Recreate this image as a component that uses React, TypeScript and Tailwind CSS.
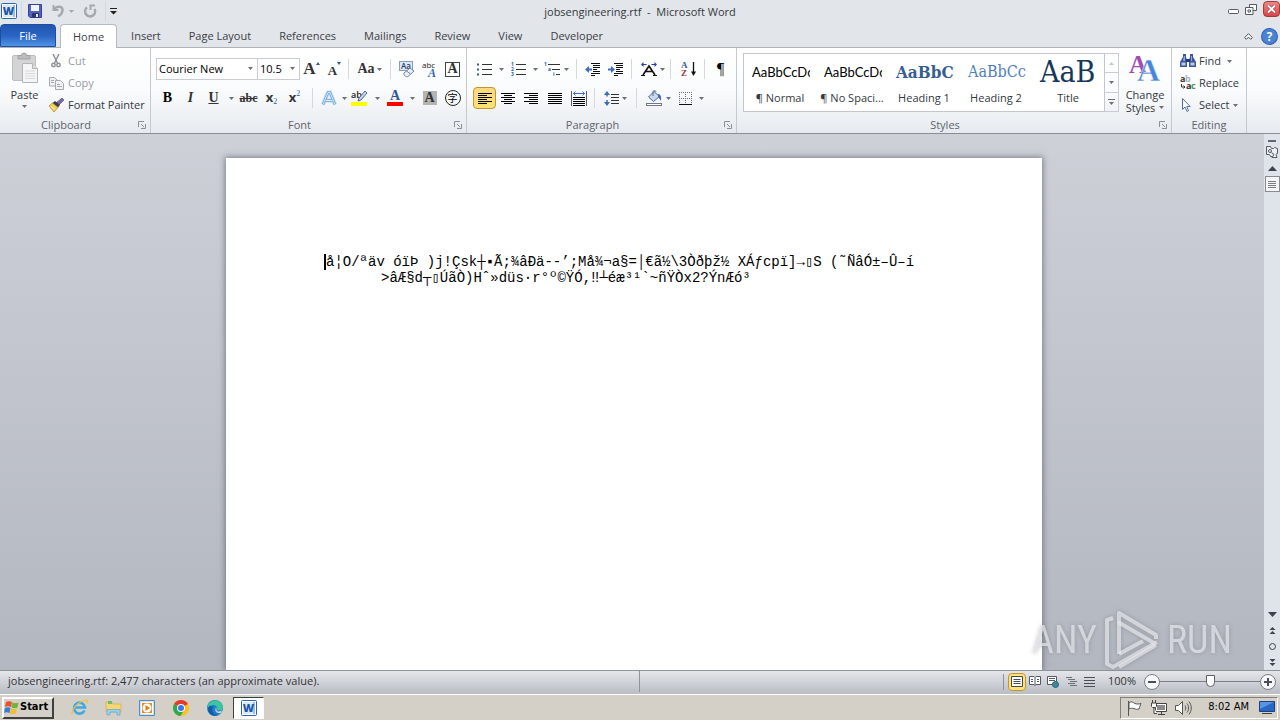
import type { ReactNode } from "react";
import clsx from "clsx";

const tabs = [
  "Insert",
  "Page Layout",
  "References",
  "Mailings",
  "Review",
  "View",
  "Developer",
];

const styleItems = [
  { name: "¶ Normal", sample: "AaBbCcDc", look: "font-['Lato',sans-serif] text-[13px] text-black" },
  { name: "¶ No Spaci...", sample: "AaBbCcDc", look: "font-['Lato',sans-serif] text-[13px] text-black" },
  { name: "Heading 1", sample: "AaBbCc", look: "font-['DejaVu_Serif_Condensed','DejaVu_Serif'] font-bold text-[17px] text-[#365f91]" },
  { name: "Heading 2", sample: "AaBbCc", look: "font-['DejaVu_Serif_Condensed','DejaVu_Serif'] text-base text-[#4f81bd]" },
  { name: "Title", sample: "AaB", look: "font-['DejaVu_Serif_Condensed','DejaVu_Serif'] text-[30px] text-[#17365d]" },
];

const Caret = ({ className = "text-[#6b7078]" }: { className?: string }) => (
  <svg width="5" height="3" viewBox="0 0 5 3" className={clsx("shrink-0", className)}>
    <path d="M0 0h5L2.5 3z" fill="currentColor" />
  </svg>
);

type ToolProps = {
  label: string;
  width?: string;
  active?: boolean;
  children: ReactNode;
};

const Tool = ({ label, width = "w-[23px]", active, children }: ToolProps) => (
  <button
    type="button"
    aria-label={label}
    className={clsx(
      "flex h-[22px] shrink-0 items-center justify-center rounded-sm",
      width,
      active && "border border-[#c2962f] bg-linear-to-b from-[#fbd980] to-[#ffe26f]"
    )}
  >
    {children}
  </button>
);

const Drop = ({ label, width = "w-3" }: { label: string; width?: string }) => (
  <Tool label={label} width={width}>
    <Caret />
  </Tool>
);

const Sep = ({ className = "mx-1" }: { className?: string }) => (
  <span className={clsx("h-5 w-px shrink-0 bg-[#d5d9de]", className)} />
);

const Launcher = ({ label }: { label: string }) => (
  <button type="button" aria-label={label} className="absolute right-1 top-1">
    <svg width="8" height="8" viewBox="0 0 8 8" fill="none" stroke="#8b9097">
      <path d="M.5 6V.5H6M3 3l3 3" />
      <path d="M7.5 3v4.500H3" />
    </svg>
  </button>
);

type GroupProps = {
  title: string;
  width: string;
  launcher?: boolean;
  children: ReactNode;
};

const Group = ({ title, width, launcher, children }: GroupProps) => (
  <section className={clsx("flex shrink-0 flex-col border-r border-[#c6cad0]", width)}>
    <div className="h-[69px]">{children}</div>
    <div className={clsx("relative h-4 text-center leading-4 text-[#5f646b]", launcher && "pr-[18px]")}>
      {title}
      {launcher && <Launcher label={title + " options"} />}
    </div>
  </section>
);

/* ---------- icons ---------- */

const WordIcon = () => (
  <svg width="16" height="16" viewBox="0 0 16 16">
    <rect x=".5" y=".5" width="15" height="15" rx="1" fill="#fff" stroke="#2b63b0" />
    <rect x="2" y="2" width="12" height="12" fill="#dbe8f7" />
    <path d="M12 2h2v12h-2z" fill="#9fbfe6" />
    <text x="7.500" y="12" textAnchor="middle" fontFamily="Open Sans" fontWeight="800" fontSize="11" fill="#1d57a8">
      W
    </text>
  </svg>
);

const SaveIcon = () => (
  <svg width="14" height="14" viewBox="0 0 14 14">
    <path d="M.5.500h13v13H2L.5 12z" fill="#5363bd" stroke="#37429a" />
    <path d="M3 1h8v6H3z" fill="#f3f5fb" />
    <path d="M4 9h7v4.500H4z" fill="#2c3377" />
    <path d="M8 10h2v3H8z" fill="#e8ebf7" />
  </svg>
);

const UndoIcon = () => (
  <svg width="14" height="14" viewBox="0 0 14 14" fill="none" stroke="#a5a9af" strokeWidth="2">
    <path d="M3.500 1v5h5" />
    <path d="M4 5.500C7 1.500 12.500 2 12.500 6c0 3-2 5-4.500 6.500" strokeWidth="2.500" />
  </svg>
);

const RedoIcon = () => (
  <svg width="14" height="14" viewBox="0 0 14 14" fill="none" stroke="#a5a9af" strokeWidth="2.500">
    <path d="M11.500 5A5 5 0 1 1 4 3.500" />
    <path d="M12 1.500H7.500V6" strokeWidth="2" />
  </svg>
);

const PasteIcon = () => (
  <svg width="28" height="32" viewBox="0 0 28 32">
    <rect x="1.500" y="3.500" width="23" height="25" rx="1.500" fill="#d4d4d6" stroke="#bdbdc0" />
    <path d="M7 7V3.500h3.500a2.500 2.500 0 0 1 5 0H19V7z" fill="#bcbcbf" stroke="#a2a2a5" />
    <path d="M11.500 11.500h10l5 5v14h-15z" fill="#f5f5f6" stroke="#b4b4b8" />
    <path d="M21.500 11.500v5h5" fill="#dedee0" stroke="#b4b4b8" />
    <path d="M14 19h10M14 21.500h10M14 24h10M14 26.500h10" stroke="#d9d9dc" />
  </svg>
);

const CutIcon = () => (
  <svg width="10" height="14" viewBox="0 0 10 14" fill="none" stroke="#8f9298" strokeWidth="1.500">
    <path d="M2 0 6.500 9M8 0 3.500 9" />
    <circle cx="2.500" cy="11" r="1.700" />
    <circle cx="7.500" cy="11" r="1.700" />
  </svg>
);

const CopyIcon = () => (
  <svg width="15" height="13" viewBox="0 0 15 13" fill="#f1f1f2" stroke="#a6a9ae">
    <path d="M.5.500h5l2.500 2.500v6H.5z" />
    <path d="M6.500 3.500h5l3 3v6h-8z" />
    <path d="M2 3.500h3M2 5.500h3M8 7.500h3M8 9.500h5" />
  </svg>
);

const BrushIcon = () => (
  <svg width="15" height="14" viewBox="0 0 15 14">
    <path d="M13 0l2 2-5 5-3-2z" fill="#7d6bb0" stroke="#4e4376" strokeWidth=".6" />
    <path d="M6 3l5 4-2 2.500-6-4z" fill="#3b414c" />
    <path d="M3.500 5l5.500 4.500-4 4.500L0 8z" fill="#f3cf58" stroke="#a98522" strokeWidth=".7" />
    <path d="M2 8.500l4 3" stroke="#fff3b8" />
  </svg>
);

const ClearFormatIcon = () => (
  <svg width="17" height="17" viewBox="0 0 17 17">
    <rect x="1.500" y=".5" width="13" height="9" fill="#dbe7f7" stroke="#8a9cba" />
    <text x="3" y="8" fontFamily="Open Sans" fontWeight="600" fontSize="8" fill="#223a66">Aa</text>
    <path d="M6 12l6-5 4 3-6 5.500c-2 1-5-1.500-4-3.500z" fill="#eceff7" stroke="#7280a8" />
    <path d="M8.500 10l4 3" stroke="#7280a8" />
  </svg>
);

const ListIcon = ({ numbered }: { numbered?: boolean }) => (
  <svg width="15" height="15" viewBox="0 0 15 15">
    <path d="M5 2.500h10M5 7.500h10M5 12.500h10" stroke="#333" />
    {numbered ? (
      <g fontFamily="Open Sans" fontWeight="700" fontSize="5" fill="#3059a8">
        <text x="0" y="4">1</text>
        <text x="0" y="9">2</text>
        <text x="0" y="14">3</text>
      </g>
    ) : (
      <path d="M0 1.500h2v2H0zM0 6.500h2v2H0zM0 11.500h2v2H0z" fill="#3b5b93" />
    )}
  </svg>
);

const MultiLevelIcon = () => (
  <svg width="17" height="15" viewBox="0 0 17 15">
    <path d="M4 2.500h12M8 7.500h8M12 12.500h4" stroke="#333" />
    <g fontFamily="Open Sans" fontWeight="700" fontSize="5" fill="#3059a8">
      <text x="0" y="4">1</text>
      <text x="4" y="9">a</text>
      <text x="9" y="14">i</text>
    </g>
  </svg>
);

const IndentIcon = ({ more }: { more?: boolean }) => (
  <svg width="16" height="13" viewBox="0 0 16 13">
    <path d="M6 .5h9M8 2.500h7M8 4.500h7M8 6.500h4M8 8.500h7M6 10.500h9M6 12.500h4" stroke="#111" />
    <path d={more ? "M0 5.500h3V3l4 3.500-4 3.500V7.500H0z" : "M7 5.500H4V3L0 6.500 4 10V7.500h3z"} fill="#3d6cc0" />
  </svg>
);

const lines = {
  left: "M0 .5h14M0 2.500h9M0 4.500h14M0 6.500h9M0 8.500h14M0 10.500h9",
  center: "M0 .5h14M3 2.500h8M0 4.500h14M3 6.500h8M0 8.500h14M3 10.500h8",
  right: "M0 .5h14M5 2.500h9M0 4.500h14M5 6.500h9M0 8.500h14M5 10.500h9",
  justify: "M0 .5h14M0 2.500h14M0 4.500h14M0 6.500h14M0 8.500h14M0 10.500h14",
};

const AlignIcon = ({ kind }: { kind: keyof typeof lines }) => (
  <svg width="14" height="11" viewBox="0 0 14 11">
    <path d={lines[kind]} stroke="#000" />
  </svg>
);

const DistributeIcon = () => (
  <svg width="16" height="15" viewBox="0 0 16 15">
    <path d="M.5 0v15M15.500 0v15" stroke="#555c68" />
    <path d="M2 2.500h12M4.500.500l-2 2 2 2M11.500.500l2 2-2 2" stroke="#3d6cc0" fill="none" />
    <path d="M2 6.500h12M2 8.500h12M2 10.500h12M2 12.500h12M2 14.500h12" stroke="#000" />
  </svg>
);

const SpacingIcon = () => (
  <svg width="15" height="15" viewBox="0 0 15 15">
    <path d="M3 1v4.500M3 9v5" stroke="#3d6cc0" strokeWidth="1.500" />
    <path d="M0 4l3-4 3 4zM0 11l3 4 3-4z" fill="#3d6cc0" />
    <path d="M7 3.500h8M7 6.500h8M7 9.500h8M7 12.500h8" stroke="#333" />
  </svg>
);

const StretchIcon = () => (
  <svg width="16" height="14" viewBox="0 0 16 14">
    <path d="M0 2.500 2.500 0v2h3v1h-3v2zM16 2.500 13.500 0v2h-3v1h3v2z" fill="#2b3fa8" />
    <path d="M0 13.500h4M12 13.500h4" stroke="#111" />
    <path d="M2 13 8 4l6 9M4.500 9.500h7" fill="none" stroke="#111" strokeWidth="1.600" />
  </svg>
);

const SortIcon = () => (
  <svg width="16" height="16" viewBox="0 0 16 16">
    <g fontFamily="Liberation Serif" fontWeight="700" fontSize="9">
      <text x="0" y="7" fill="#3059a8">A</text>
      <text x="0" y="15" fill="#a5353a">Z</text>
    </g>
    <path d="M12.500 1v12" stroke="#111" strokeWidth="1.300" />
    <path d="M10 10.500h5L12.500 15z" fill="#111" />
  </svg>
);

const BucketIcon = () => (
  <svg width="16" height="16" viewBox="0 0 16 16">
    <path d="M8 1.500l5.500 5-6 5-5-4.500z" fill="#c9d9f0" stroke="#54698f" />
    <path d="M7 6V2c0-2 3-2 3 0" fill="none" stroke="#54698f" />
    <path d="M12 4c3 0 3.500 3 3 7-1-2-2-3-3-4z" fill="#3d6cc0" />
    <rect x=".5" y="13.500" width="15" height="2" fill="#fff" stroke="#6b7890" />
  </svg>
);

const BorderIcon = () => (
  <svg width="13" height="13" viewBox="0 0 13 13" stroke="#6d7177">
    <path d="M.5 0v12M6.500 0v12M12.500 0v12M0 .5h13M0 6.500h13" strokeDasharray="1 1" />
    <path d="M0 12.500h13" stroke="#111" />
  </svg>
);

const HighlightIcon = () => (
  <svg width="17" height="17" viewBox="0 0 17 17">
    <text x="0" y="8" fontFamily="Open Sans" fontWeight="600" fontSize="9" fill="#222">ab</text>
    <path d="M14 1l2 2-6 7-3 1 1-3z" fill="#c9d3e8" stroke="#556a96" />
    <path d="M0 12h16v4H0z" fill="#ff0" />
  </svg>
);

const FontColorIcon = () => (
  <svg width="16" height="17" viewBox="0 0 16 17">
    <text x="8" y="10" textAnchor="middle" fontFamily="Liberation Serif" fontWeight="700" fontSize="14" fill="#36549a">A</text>
    <path d="M0 12h16v4H0z" fill="#f00" />
  </svg>
);

const PhoneticIcon = () => (
  <svg width="17" height="17" viewBox="0 0 17 17" className="overflow-visible">
    <text x="1" y="7" fontFamily="Open Sans" fontSize="8" fill="#222">abc</text>
    <text x="7" y="16" fontFamily="Liberation Serif" fontStyle="italic" fontWeight="700" fontSize="12" fill="#2f66b8">A</text>
  </svg>
);

const ChangeStylesIcon = () => (
  <svg width="30" height="29" viewBox="0 0 30 29" className="overflow-visible" fontFamily="Liberation Serif" fontWeight="700">
    <text x="-1" y="20" fontSize="25" fill="#a04fb0">A</text>
    <text x="7" y="28" fontSize="32" fill="#4a86d8" stroke="#fff" strokeWidth=".4">A</text>
  </svg>
);

const FindIcon = () => (
  <svg width="16" height="14" viewBox="0 0 16 14">
    <path d="M3 0h3v3l1 3v7H0V8l3-5zM10 0h3v3l3 5v5H9V6l1-3z" fill="#3c549c" />
    <path d="M1.500 8.500h4v3h-4zM10.500 8.500h4v3h-4z" fill="#b9c9ee" />
    <path d="M4 2h1v5H3zM11 2h1v5h-1z" fill="#93a8de" />
    <path d="M6 5h4v3H6z" fill="#28396f" />
  </svg>
);

const ReplaceIcon = () => (
  <svg width="17" height="16" viewBox="0 0 17 16" fontFamily="Open Sans" fontWeight="700" fontSize="9">
    <text x="0" y="7" fill="#333">a</text>
    <text x="5" y="7" fill="#aeb2b8">b</text>
    <text x="6" y="14" fill="#333">a</text>
    <text x="11" y="14" fill="#3c9a45">c</text>
    <path d="M1.500 9v3H5M3.500 10.500 5 12l-1.500 1.500" fill="none" stroke="#333" />
  </svg>
);

const PointerIcon = () => (
  <svg width="9" height="14" viewBox="0 0 9 14">
    <path d="M.5.500v11L3 9l2 4.500 1.500-.8L4.700 8.500h3.500z" fill="#fff" stroke="#57719f" />
  </svg>
);

const ArrowUpDown = ({ kind }: { kind: "up" | "down" | "prev" | "next" | "ball" }) => (
  <svg width="9" height="9" viewBox="0 0 9 9" fill="#3e434b">
    {kind === "up" && <path d="M0 7h9L4.500 2z" />}
    {kind === "down" && <path d="M0 2h9L4.500 7z" />}
    {kind === "prev" && <path d="M1.500 4h6l-3-3zM1.500 8h6l-3-3z" />}
    {kind === "next" && <path d="M1.500 1h6l-3 3zM1.500 5h6l-3 3z" />}
    {kind === "ball" && <circle cx="4.500" cy="4.500" r="3" fill="none" stroke="#3e434b" />}
  </svg>
);

/* ---------- window parts ---------- */

const TitleBar = () => (
  <header className="relative flex h-6 shrink-0 items-center justify-between pb-0.5 pl-px">
    <div className="flex items-center">
      <WordIcon />
      <Sep className="ml-1 h-4" />
      <div className="ml-1.5 flex items-center">
        <button type="button" aria-label="Save"><SaveIcon /></button>
        <button type="button" aria-label="Undo" className="ml-2"><UndoIcon /></button>
        <button type="button" aria-label="Undo history" className="ml-1 mr-2 px-px">
          <Caret className="text-[#a5a9af]" />
        </button>
        <button type="button" aria-label="Redo"><RedoIcon /></button>
      </div>
      <Sep className="ml-2 mr-1 h-4" />
      <button type="button" aria-label="Customize Quick Access Toolbar">
        <svg width="7" height="7" viewBox="0 0 7 7">
          <path d="M0 0h7v1H0zM0 3h7L3.500 6.500z" fill="#222" />
        </svg>
      </button>
    </div>
    <h1 className="pointer-events-none absolute inset-x-0 top-1 text-center leading-4 whitespace-pre">
      jobsengineering.rtf  -  Microsoft Word
    </h1>
    <div className="flex items-center gap-1.5">
      <button type="button" aria-label="Minimize">
        <svg width="11" height="5" viewBox="0 0 11 5">
          <rect x=".5" y=".5" width="10" height="4" rx="1" fill="#fff" stroke="#555a62" />
        </svg>
      </button>
      <button type="button" aria-label="Restore">
        <svg width="12" height="11" viewBox="0 0 12 11" className="mb-1" fill="#fff" stroke="#555a62">
          <path d="M4.500.500h7v6h-7z" />
          <path d="M.5 3.500h7.500v7H.5z" />
          <path d="M3 6h2.500v2H3z" />
        </svg>
      </button>
      <button
        type="button"
        aria-label="Close"
        className="mb-1 flex h-4 w-[17px] items-center justify-center rounded-sm border border-[#a33a3a] bg-linear-to-b from-[#ee8585] to-[#d8444a]"
      >
        <svg width="9" height="8" viewBox="0 0 9 8">
          <path d="M1 .5l7 7M8 .5l-7 7" stroke="#7b2226" strokeWidth="3" />
          <path d="M1 .5l7 7M8 .5l-7 7" stroke="#fff" strokeWidth="2" />
        </svg>
      </button>
    </div>
  </header>
);

const TabBar = () => (
  <nav className="flex h-6 shrink-0 items-stretch border-b border-[#aeb3ba] text-[#3b4047] *:pt-px">
    <button
      type="button"
      className="w-14 shrink-0 rounded-t border border-[#1c4f9f] bg-linear-to-b from-[#2257b0] via-[#2a63c2] to-[#4f93e6] text-white"
    >
      File
    </button>
    <button
      type="button"
      className="-mb-px ml-1 rounded-t border border-b-0 border-[#b6bac1] bg-white px-3"
    >
      Home
    </button>
    {tabs.map((tab) => (
      <button type="button" key={tab} className="px-3.5">
        {tab}
      </button>
    ))}
    <div className="ml-auto flex items-center gap-2 pr-0.5">
      <button type="button" aria-label="Minimize the Ribbon">
        <svg width="9" height="7" viewBox="0 0 9 7">
          <path d="M.7 4.500 4.500.700l3.800 3.800-1.600 1.800-2.200-2.200-2.200 2.200z" fill="#fff" stroke="#444a52" />
        </svg>
      </button>
      <button type="button" aria-label="Help">
        <svg width="17" height="17" viewBox="0 0 16 16">
          <circle cx="8" cy="8" r="7.500" fill="#4a82d4" stroke="#2f62b4" />
          <text x="8" y="12" textAnchor="middle" fontFamily="Open Sans" fontWeight="700" fontSize="11" fill="#fff">?</text>
        </svg>
      </button>
    </div>
  </nav>
);

const ClipboardGroup = () => (
  <Group title="Clipboard" width="w-[151px]" launcher>
    <div className="flex">
      <button type="button" className="flex w-[49px] flex-col items-center pt-1 leading-4">
        <PasteIcon />
        <span className="mt-[3px]">Paste</span>
        <span className="pt-0.5"><Caret /></span>
      </button>
      <div className="flex flex-col items-start pt-0.5 leading-[22px]">
        <button type="button" disabled className="flex items-center text-[#9a9da3]">
          <span className="flex w-[19px] justify-start pl-0.5"><CutIcon /></span>Cut
        </button>
        <button type="button" disabled className="flex items-center text-[#9a9da3]">
          <span className="flex w-[19px] justify-start"><CopyIcon /></span>Copy
        </button>
        <button type="button" className="flex items-center whitespace-nowrap">
          <span className="flex w-[19px] justify-start"><BrushIcon /></span>Format Painter
        </button>
      </div>
    </div>
  </Group>
);

type ComboProps = { label: string; value: string; width: string };

const Combo = ({ label, value, width }: ComboProps) => (
  <label className={clsx("relative flex h-[22px] items-center border border-[#c9cdd3] bg-white", width)}>
    <select
      aria-label={label}
      defaultValue={value}
      className="h-full w-full appearance-none bg-transparent pl-0.5 text-black outline-none"
    >
      <option>{value}</option>
    </select>
    <span className="pointer-events-none absolute right-1 top-2"><Caret /></span>
  </label>
);

const FontGroup = () => (
  <Group title="Font" width="w-[316px]" launcher>
    <div className="flex h-full flex-col gap-[7px] pl-[5px] pt-2.5 font-['Liberation_Serif',serif] text-[#333]">
      <div className="flex items-center">
        <div className="flex font-['Open_Sans',sans-serif]">
          <Combo label="Font" value="Courier New" width="w-[102px]" />
          <Combo label="Font Size" value="10.5" width="w-[43px] -ml-px" />
        </div>
        <Tool label="Grow Font">
          <b className="text-[17px]">A</b>
          <svg width="4" height="3" viewBox="0 0 4 3" className="mb-3"><path d="M0 3h4L2 0z" fill="#36549a" /></svg>
        </Tool>
        <Tool label="Shrink Font">
          <b className="pt-1 text-[13px]">A</b>
          <svg width="4" height="3" viewBox="0 0 4 3" className="mb-3"><path d="M0 0h4L2 3z" fill="#36549a" /></svg>
        </Tool>
        <Sep className="ml-0.5 mr-1.5" />
        <Tool label="Change Case" width="w-[29px]">
          <b className="pr-0.5 text-sm">Aa</b>
          <Caret />
        </Tool>
        <Sep className="ml-1.5 mr-1" />
        <Tool label="Clear Formatting"><ClearFormatIcon /></Tool>
        <Tool label="Phonetic Guide"><PhoneticIcon /></Tool>
        <Tool label="Character Border">
          <b className="flex size-[15px] items-center justify-center border border-[#444] text-sm leading-none">A</b>
        </Tool>
      </div>
      <div className="flex items-center">
        <Tool label="Bold"><b className="text-sm text-black">B</b></Tool>
        <Tool label="Italic"><i className="text-sm font-bold">I</i></Tool>
        <Tool label="Underline"><b className="text-sm underline">U</b></Tool>
        <Drop label="Underline style" />
        <Tool label="Strikethrough">
          <b className="text-xs line-through">abc</b>
        </Tool>
        <Tool label="Subscript">
          <b className="font-['Open_Sans',sans-serif] text-[13px]">x</b>
          <span className="mt-2 text-[8px] text-[#3059a8]">2</span>
        </Tool>
        <Tool label="Superscript">
          <b className="font-['Open_Sans',sans-serif] text-[13px]">x</b>
          <span className="mb-2 text-[8px] text-[#3059a8]">2</span>
        </Tool>
        <Sep className="ml-1.5 mr-1" />
        <Tool label="Text Effects">
          <svg width="16" height="17" viewBox="0 0 16 17">
            <path d="M2 14.500 7 2.500h2l5 12M4.500 10.500h7" fill="none" stroke="#b5d6f3" strokeWidth="4" strokeLinejoin="round" />
            <path d="M2 14.500 7 2.500h2l5 12M4.500 10.500h7" fill="none" stroke="#5e9bd3" strokeWidth="2" />
            <path d="M2 14.500 7 2.500h2l5 12M4.500 10.500h7" fill="none" stroke="#fff" strokeWidth=".8" />
          </svg>
        </Tool>
        <Drop label="Text Effects options" width="w-2" />
        <Tool label="Highlight"><HighlightIcon /></Tool>
        <Drop label="Highlight color" />
        <Tool label="Font Color"><FontColorIcon /></Tool>
        <Drop label="Font Color options" />
        <Tool label="Character Shading">
          <b className="flex size-3.5 items-center justify-center bg-[#b4b4b4] text-sm leading-none">A</b>
        </Tool>
        <Tool label="Enclose Characters">
          <span className="flex size-4 items-center justify-center rounded-full border border-[#222] font-['Noto_Sans_CJK_SC',sans-serif] text-[10px] leading-none text-black">
            字
          </span>
        </Tool>
      </div>
    </div>
  </Group>
);

const ParagraphGroup = () => (
  <Group title="Paragraph" width="w-[270px]" launcher>
    <div className="flex h-full flex-col gap-[7px] pl-1.5 pt-2.5">
      <div className="flex items-center">
        <Tool label="Bullets"><ListIcon /></Tool>
        <Drop label="Bullet library" width="w-[11px]" />
        <Tool label="Numbering"><ListIcon numbered /></Tool>
        <Drop label="Numbering library" width="w-[11px]" />
        <Tool label="Multilevel List"><MultiLevelIcon /></Tool>
        <Drop label="List library" width="w-1" />
        <Sep className="ml-2 mr-1" />
        <Tool label="Decrease Indent"><IndentIcon /></Tool>
        <Tool label="Increase Indent"><IndentIcon more /></Tool>
        <Sep className="ml-1 mr-1.5" />
        <Tool label="Asian Layout" width="w-[22px]"><StretchIcon /></Tool>
        <Drop label="Asian Layout options" width="w-1" />
        <Sep className="mx-1.5" />
        <Tool label="Sort"><SortIcon /></Tool>
        <Sep className="mx-1" />
        <Tool label="Show paragraph marks">
          <span className="font-['Liberation_Serif',serif] text-base text-black">¶</span>
        </Tool>
      </div>
      <div className="flex items-center">
        <Tool label="Align Left" active><AlignIcon kind="left" /></Tool>
        <Tool label="Center"><AlignIcon kind="center" /></Tool>
        <Tool label="Align Right" width="w-6"><AlignIcon kind="right" /></Tool>
        <Tool label="Justify" width="w-6"><AlignIcon kind="justify" /></Tool>
        <Tool label="Distributed"><DistributeIcon /></Tool>
        <Sep className="ml-1 mr-2" />
        <Tool label="Line Spacing" width="w-[17px]"><SpacingIcon /></Tool>
        <Drop label="Line Spacing options" width="w-2" />
        <Sep className="mx-2" />
        <Tool label="Shading" width="w-[17px]"><BucketIcon /></Tool>
        <Drop label="Shading color" />
        <Tool label="Borders"><BorderIcon /></Tool>
        <Drop label="Border options" width="w-2" />
      </div>
    </div>
  </Group>
);

const StylesGroup = () => (
  <Group title="Styles" width="w-[435px]" launcher>
    <div className="flex pl-1.5 pt-[5px]">
      <div className="flex h-[59px] border border-[#c3c7cd] bg-white">
        {styleItems.map((item) => (
          <button type="button" key={item.name} className="flex w-[72px] flex-col items-center px-1.5">
            <span className={clsx("flex h-9 w-full shrink-0 items-center overflow-hidden pl-0.5 leading-none", item.look)}>
              {item.sample}
            </span>
            <span className="leading-4 whitespace-nowrap">{item.name}</span>
          </button>
        ))}
      </div>
      <div className="flex h-[59px] w-3.5 flex-col divide-y divide-[#c9cdd3] border border-l-0 border-[#c9cdd3]">
        <button type="button" aria-label="Previous styles" className="flex flex-1 items-center justify-center">
          <svg width="5" height="3" viewBox="0 0 5 3"><path d="M0 3h5L2.500 0z" fill="#c5c8cc" /></svg>
        </button>
        <button type="button" aria-label="Next styles" className="flex flex-1 items-center justify-center">
          <Caret />
        </button>
        <button type="button" aria-label="More styles" className="flex flex-1 flex-col items-center justify-center gap-0.5">
          <span className="h-px w-[7px] bg-[#6b7078]" />
          <Caret />
        </button>
      </div>
      <button type="button" className="flex flex-1 flex-col items-center leading-[13px]">
        <ChangeStylesIcon />
        <span className="mt-1.5">Change</span>
        <span className="flex items-center gap-1">Styles <Caret /></span>
      </button>
    </div>
  </Group>
);

const EditingGroup = () => (
  <Group title="Editing" width="w-[75px]">
    <div className="flex flex-col items-start pl-2 pt-0.5 leading-[22px]">
      <button type="button" className="flex items-center">
        <span className="w-[19px]"><FindIcon /></span>Find
        <span className="pl-1.5"><Caret /></span>
      </button>
      <button type="button" className="flex items-center">
        <span className="w-[19px]"><ReplaceIcon /></span>Replace
      </button>
      <button type="button" className="flex items-center">
        <span className="w-[19px] pl-0.5"><PointerIcon /></span>Select
        <span className="pl-1"><Caret /></span>
      </button>
    </div>
  </Group>
);

const VerticalScroll = () => (
  <div className="flex w-4 shrink-0 flex-col items-center bg-[#dfe3ea]">
    <span className="mt-1.5 h-0.5 w-2 bg-[#62676f]" />
    <button type="button" aria-label="View Ruler" className="mt-0.5 flex h-4 items-center">
      <svg width="12" height="12" viewBox="0 0 12 12" fill="#eef0f3" stroke="#565b63">
        <path d="M.5.500h4l1 2h2l1-1 3 1v5l-2 1M.5.500v8h3l1 2h2" />
        <circle cx="4" cy="5" r="1.500" />
        <path d="M5.500 6.500 8 8.500l-2 3h5l-1-3" />
      </svg>
    </button>
    <button type="button" aria-label="Scroll up" className="flex h-4 items-center">
      <ArrowUpDown kind="up" />
    </button>
    <div className="flex h-4 w-[15px] flex-col items-center justify-center gap-px border border-[#868b94] bg-[#f4f5f7]">
      <span className="h-px w-2 bg-[#777c85]" />
      <span className="h-px w-2 bg-[#777c85]" />
      <span className="h-px w-2 bg-[#777c85]" />
      <span className="h-px w-2 bg-[#777c85]" />
    </div>
    <div className="mt-auto flex flex-col items-center">
      <button type="button" aria-label="Scroll down" className="flex h-4 items-center"><ArrowUpDown kind="down" /></button>
      <button type="button" aria-label="Previous Page" className="flex h-4 items-center"><ArrowUpDown kind="prev" /></button>
      <button type="button" aria-label="Select Browse Object" className="flex h-4 items-center"><ArrowUpDown kind="ball" /></button>
      <button type="button" aria-label="Next Page" className="flex h-4 items-center"><ArrowUpDown kind="next" /></button>
    </div>
  </div>
);

const Watermark = () => (
  <div className="pointer-events-none absolute bottom-0 right-12 flex items-center gap-2 font-['Liberation_Sans_Narrow','Roboto_Condensed','Liberation_Sans',sans-serif] text-[38px] leading-none text-[#e4e6e9]/75 drop-shadow-[0_0_2px_rgba(90,95,105,0.5)]">
    <span>ANY</span>
    <svg width="54" height="60" viewBox="0 0 54 60" fill="none" stroke="currentColor" strokeWidth="4" strokeLinejoin="round">
      <path d="M8 8 2 10v44l6 3 44-25" />
      <path d="M14 44V3l37 22v4" />
      <path d="M13 12l36 21" />
      <path d="M14 57l37-22M14 44l24-13" />
    </svg>
    <span>RUN</span>
  </div>
);

const Workspace = () => (
  <main className="relative flex min-h-0 flex-1 bg-linear-to-b from-[#cdd0d7] to-[#b3b7bf]">
    <div className="flex min-w-0 flex-1 justify-center overflow-hidden pl-1 pt-6">
      <article className="w-[816px] shrink-0 bg-white pl-[99px] pt-24 shadow-[0_0_6px_1px_rgba(70,75,85,0.6)]">
        <p className="font-['Liberation_Mono','DejaVu_Sans_Mono',monospace] text-sm leading-4 whitespace-pre text-black">
          <span className="-ml-px border-l-2 border-black">å</span>
          {"¦O/ªäv óïÞ )j!Çsk┼▪Ã;¾âÐä--’;Må¾¬a§=│€ã½\\3Òðþž½ XÁƒcpï]→▯S (˜ÑâÓ±–Û–í"}
          <br />
          <span className="pl-14">{">âÆ§d┬▯ÚãÒ)Hˆ»düs·r°º©ŸÓ,‼┴éæ³¹`~ñŸÒx2?ÝnÆó³"}</span>
        </p>
      </article>
    </div>
    <Watermark />
    <VerticalScroll />
  </main>
);

const ViewButton = ({ label, active, children }: ToolProps) => (
  <button
    type="button"
    aria-label={label}
    className={clsx(
      "flex h-[18px] w-[18px] items-center justify-center",
      active && "rounded-sm border border-[#c2962f] bg-[#ffe27a]"
    )}
  >
    {children}
  </button>
);

const ZoomButton = ({ label, plus }: { label: string; plus?: boolean }) => (
  <button type="button" aria-label={label}>
    <svg width="16" height="16" viewBox="0 0 16 16">
      <circle cx="8" cy="8" r="7.500" fill="#f6f7f8" stroke="#7a7f87" />
      <path d={plus ? "M4 8h8M8 4v8" : "M4 8h8"} stroke="#4a4f57" strokeWidth="2" />
    </svg>
  </button>
);

const StatusBar = () => (
  <footer className="flex h-6 shrink-0 items-center border-t border-[#8f949c] bg-linear-to-b from-[#e4e6ea] to-[#b9bdc4] pb-0.5 text-[#333]">
    <div className="flex h-full w-1/2 items-center border-r border-[#8f949c] pl-2">
      jobsengineering.rtf: 2,477 characters (an approximate value).
    </div>
    <div className="flex h-full flex-1 items-center justify-end">
      <span className="mr-1 h-4 w-px bg-[#8f949c]" />
      <ViewButton label="Print Layout" active>
        <svg width="12" height="11" viewBox="0 0 12 11" fill="#fff" stroke="#444a52">
          <path d="M.5.500h11v10H.5zM2.500 3.500h7M2.500 5.500h7M2.500 7.500h7" />
        </svg>
      </ViewButton>
      <ViewButton label="Full Screen Reading">
        <svg width="12" height="11" viewBox="0 0 12 11" fill="#fff" stroke="#555a62">
          <path d="M.5.500h4.500l1 1 1-1h4.500v8H7l-1 1-1-1H.5zM6 1.500v8M2 3.500h2M2 5.500h2M8 3.500h2M8 5.500h2" />
        </svg>
      </ViewButton>
      <ViewButton label="Web Layout">
        <svg width="12" height="12" viewBox="0 0 12 12" fill="#fff" stroke="#555a62">
          <path d="M.5.500h9v8h-9zM2 2.500h6M2 4.500h6" />
          <circle cx="8.500" cy="8.500" r="3" fill="#3f8a8f" stroke="#2a5b8c" />
        </svg>
      </ViewButton>
      <ViewButton label="Outline">
        <svg width="11" height="11" viewBox="0 0 11 11" stroke="#6d7279">
          <path d="M0 1.500h6M2 3.500h7M4 5.500h7M2 7.500h7M4 9.500h7" />
        </svg>
      </ViewButton>
      <ViewButton label="Draft">
        <svg width="11" height="11" viewBox="0 0 11 11" stroke="#4a4f57">
          <path d="M0 1.500h11M0 4.500h11M0 7.500h11M0 10.500h11" />
        </svg>
      </ViewButton>
      <button type="button" className="ml-2.5 mr-2 w-7">100%</button>
      <ZoomButton label="Zoom Out" />
      <input
        type="range"
        aria-label="Zoom"
        min={0}
        max={100}
        defaultValue={50}
        className="h-4 w-[100px] appearance-none bg-transparent [&::-webkit-slider-runnable-track]:h-px [&::-webkit-slider-runnable-track]:bg-[#7a7f87] [&::-webkit-slider-thumb]:-mt-1.5 [&::-webkit-slider-thumb]:h-3 [&::-webkit-slider-thumb]:w-[9px] [&::-webkit-slider-thumb]:appearance-none [&::-webkit-slider-thumb]:rounded-b-full [&::-webkit-slider-thumb]:border [&::-webkit-slider-thumb]:border-[#5a5f67] [&::-webkit-slider-thumb]:bg-white"
      />
      <span className="mr-1 flex"><ZoomButton label="Zoom In" plus /></span>
    </div>
  </footer>
);

const taskIcons: { label: string; icon: ReactNode }[] = [
  {
    label: "Internet Explorer",
    icon: (
      <svg width="17" height="17" viewBox="0 0 17 17" fill="none">
        <path d="M13.500 11.500A5.500 5.500 0 1 1 14 8.500H4" stroke="#3fa9e6" strokeWidth="2.600" />
        <path d="M1.500 15.500C-1 12 7 2 15.500 1c1.500 1 .5 3 0 3.500" stroke="#f0c23b" strokeWidth="1.200" />
      </svg>
    ),
  },
  {
    label: "Explorer",
    icon: (
      <svg width="17" height="16" viewBox="0 0 17 16">
        <path d="M1 2h6l1 2h8v8H1z" fill="#f4d675" stroke="#d0a93e" strokeWidth=".6" />
        <path d="M3 1h4v3H3z" fill="#6bbf6b" />
        <path d="M2 15V9.500h13V15h-3v-3H5v3z" fill="#9cd0f0" stroke="#5a9cc8" strokeWidth=".6" />
      </svg>
    ),
  },
  {
    label: "Media Player",
    icon: (
      <svg width="16" height="16" viewBox="0 0 16 16">
        <path d="M.5.500h15v15H.5z" fill="#cfe4f5" stroke="#4f8dc0" />
        <path d="M2.500 2.500h11v11h-11z" fill="#f08a1c" stroke="#fff" />
        <circle cx="8" cy="8" r="4.500" fill="#fff" />
        <path d="M6.500 5v6L11 8z" fill="#e87a10" />
      </svg>
    ),
  },
  {
    label: "Chrome",
    icon: (
      <svg width="16" height="16" viewBox="0 0 16 16">
        <circle cx="8" cy="8" r="8" fill="#fbc116" />
        <path d="M8 8 1.100 4A8 8 0 0 1 14.900 4z" fill="#e33b2e" />
        <path d="M8 8 1.100 4A8 8 0 0 0 7.500 16l3.500-6z" fill="#2da94f" />
        <circle cx="8" cy="8" r="4" fill="#fff" />
        <circle cx="8" cy="8" r="3" fill="#3a78e7" />
      </svg>
    ),
  },
  {
    label: "Edge",
    icon: (
      <svg width="16" height="16" viewBox="0 0 16 16">
        <circle cx="8" cy="8" r="8" fill="#1b7fd1" />
        <path d="M1 5C4-1.500 15-1 16 7c0 3-3 4-6 3 1-3-1-5-4-5-2 0-4 1-5.500 4z" fill="#3cc6a0" />
        <path d="M6 7c-2 3 0 8 5 8-5 2-10-1-10-6 0-3 3-4 5-2z" fill="#125ca8" />
        <path d="M9 7.500c1 1 0 2.500 1 3.500 2 1 4 0 5-1l-1 3c-4 1-7-2-5-5.500z" fill="#d4d0c8" />
      </svg>
    ),
  },
];

const TaskBar = () => (
  <div className="flex h-[26px] shrink-0 items-center border-t border-white bg-[#d4d0c8] pl-0.5 pr-0.5 font-['DejaVu_Sans_Condensed','DejaVu_Sans',sans-serif] text-black">
    <button
      type="button"
      className="flex h-[22px] w-[52px] items-center gap-px border-2 border-b-[#404040] border-l-white border-r-[#404040] border-t-white font-bold"
    >
      <svg width="15" height="15" viewBox="0 0 15 15">
        <path d="M2 2c2-1 4-1 6 0L7 7C5 6 3 6 1 7z" fill="#e8512a" />
        <path d="M8.500 2.500c2 1 4 1 6 0l-1 5c-2 1-4 1-6 0z" fill="#6fb43c" />
        <path d="M1 8c2-1 4-1 5.500 0l-1 5c-2-1-4-1-5.500 0z" fill="#3a7cd6" />
        <path d="M7 8.500c2 1 4 1 6 0l-1 5c-2 1-4 1-6 0z" fill="#f4bd2d" />
      </svg>
      Start
    </button>
    <div className="ml-2 flex items-center">
      {taskIcons.map((item) => (
        <button type="button" key={item.label} aria-label={item.label} className="flex w-[34px] items-center justify-center">
          {item.icon}
        </button>
      ))}
      <button
        type="button"
        aria-label="Microsoft Word"
        className="ml-px flex h-[22px] w-[31px] items-center justify-center border border-b-white border-l-[#404040] border-r-white border-t-[#404040] bg-white"
      >
        <WordIcon />
      </button>
    </div>
    <div className="ml-auto flex h-[22px] items-center border border-b-white border-l-[#808080] border-r-white border-t-[#808080] pl-1.5 pr-0.5">
      <svg width="16" height="16" viewBox="0 0 16 16" fill="#fff" stroke="#555">
        <path d="M1.500 1v15M2 2.500c3-1.500 4 0 6 1 2 .8 4 .5 6 0-1 2-1 3-2 5.500-2 .5-3 .5-5-.5C5 8 4 8 2 9z" />
      </svg>
      <svg width="16" height="16" viewBox="0 0 16 16" fill="#fff" stroke="#444" className="ml-2">
        <path d="M4.500 3.500h11v8h-11zM7 14.500h7M10.500 11.500v3" />
        <path d="M6 5h8v5H6z" fill="#8b8b8b" stroke="none" />
        <path d="M1.500 0v3M4.500 0v3M.5 3h5v3.500l-1 1h-3l-1-1zM3 7.500v6h3" />
      </svg>
      <svg width="17" height="16" viewBox="0 0 17 16" fill="#fff" stroke="#555" className="ml-2">
        <path d="M.5 5.500h3l4-4v13l-4-4h-3z" />
        <path d="M10 5.500c1 1.500 1 3.500 0 5M12 3.500c2 2.500 2 6.500 0 9M14 1.500c3 4 3 9 0 13" fill="none" />
      </svg>
      <time className="ml-4 mr-2.5 whitespace-nowrap">8:02 AM</time>
      <svg width="16" height="14" viewBox="0 0 16 14">
        <path d="M.5.500h15v10H.5z" fill="#2a66c4" stroke="#1c3f7e" />
        <path d="M1 1h14L1 8z" fill="#5b93e3" />
        <path d="M3 12.500h10" stroke="#3a3f47" />
      </svg>
    </div>
  </div>
);

export default function App() {
  return (
    <div className="flex h-screen flex-col overflow-hidden bg-[#e2e5e9] font-['Open_Sans',sans-serif] text-[11px] text-[#333940]">
      <TitleBar />
      <TabBar />
      <div className="flex shrink-0 border-b border-[#8a8f97] bg-linear-to-b from-white via-[#fafbfc] to-[#e6eaef]">
        <ClipboardGroup />
        <FontGroup />
        <ParagraphGroup />
        <StylesGroup />
        <EditingGroup />
      </div>
      <Workspace />
      <StatusBar />
      <TaskBar />
    </div>
  );
}
